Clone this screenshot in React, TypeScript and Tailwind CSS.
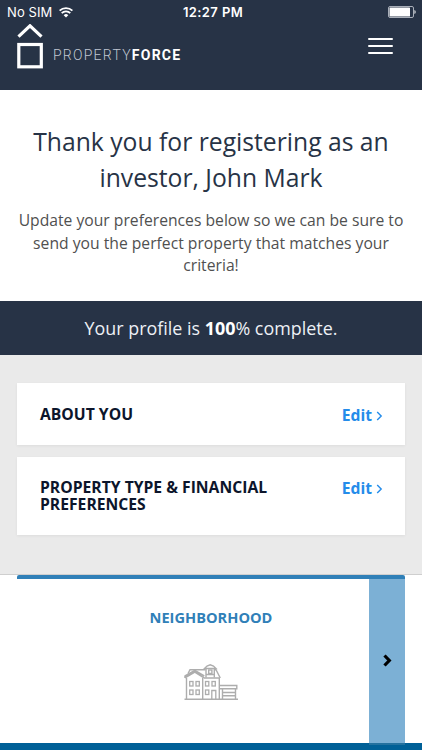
function StatusBar() {
  return (
    <div className="grid h-6 grid-cols-3 items-center pl-[7px] pr-[6px] text-[13px] leading-6 text-white font-['Inter',sans-serif]">
      <div className="flex items-center gap-[7px]">
        <span className="tracking-[0.1px]">No SIM</span>
        <svg width="14" height="11" viewBox="0 0 14 11" fill="none" stroke="white" strokeWidth="1.8">
          <path d="M.6 3.7a9 9 0 0 1 12.800 0M2.700 6.100a6.100 6.100 0 0 1 8.600 0" />
          <path d="M4.700 8.200a3.300 3.300 0 0 1 4.600 0L7 10.600Z" fill="white" stroke="none" />
        </svg>
      </div>
      <span className="whitespace-nowrap pl-[3px] text-center font-semibold tracking-[0.4px]">12:27 PM</span>
      <svg className="justify-self-end" width="28" height="12" viewBox="0 0 28 12">
        <rect x=".5" y=".5" width="25" height="11" rx="1.5" fill="none" stroke="#a9afb9" />
        <rect x="1.5" y="1.5" width="20.5" height="9" rx=".6" fill="white" />
        <path d="M26.500 4c1.500.5 1.500 3.500 0 4Z" fill="white" />
      </svg>
    </div>
  );
}

function Header() {
  return (
    <header className="h-[90px] bg-[#273346]">
      <StatusBar />
      <div className="flex h-[45px] items-start justify-between pl-[17px] pr-[29px]">
        <div className="flex items-start">
          <svg width="26" height="45" viewBox="0 0 26 45" fill="none" stroke="white">
            <path d="M1.500 12.600 13 1.800l11.500 10.800" strokeWidth="3.200" />
            <rect x="1.800" y="20.500" width="22.500" height="22.300" strokeWidth="3.200" />
          </svg>
          <span className="ml-[10px] mt-[21px] text-[14px] leading-5 tracking-[1.25px] text-[#c0c7d2] font-['Roboto',sans-serif] font-light">
            PROPERTY<b className="font-bold text-white">FORCE</b>
          </span>
        </div>
        <button className="mt-[14px] flex flex-col gap-[5px]" aria-label="Menu">
          <span className="h-[2px] w-[25px] rounded-[1px] bg-white" />
          <span className="h-[2px] w-[25px] rounded-[1px] bg-white" />
          <span className="h-[2px] w-[25px] rounded-[1px] bg-white" />
        </button>
      </div>
    </header>
  );
}

function Edit() {
  return (
    <a className="flex h-[20px] items-center text-[15.7px] leading-[20px] font-bold text-[#258cea]">
      Edit
      <svg className="ml-[4px] mt-[2px]" width="7" height="10" viewBox="0 0 7 10" fill="none" stroke="#258cea" strokeWidth="1.4">
        <path d="m1.200 1 4 4-4 4" />
      </svg>
    </a>
  );
}

function House() {
  return (
    <svg width="55" height="37" viewBox="0 0 55 37" fill="none" stroke="#adadad" strokeWidth="1.4">
      <path d="M.5 35.300h53.500M2.500 35V14M18.700 35V14M35.300 35V14" />
      <path d="M1 13.800 10.800 8 20 13.800M1 12 10.800 6.300 20.300 12M1 11.500v2.500M20 14h16" strokeWidth="1.500" />
      <path d="M4 9.500 6 5.700h15.500M30.500 5.700h1.500L36.300 14" />
      <path d="M22 13.500V4.500M30.300 13.500V4.500M20.500 4.500 23 2l3.200-1.200L29.500 2 32 4.500ZM22.500 10.500h8" />
      <rect x="24.700" y="6" width="3.200" height="3.500" />
      <g strokeWidth="1.300">
        <rect x="5.700" y="17.500" width="3.300" height="4.500" />
        <rect x="12" y="17.500" width="3.300" height="4.500" />
        <rect x="5.700" y="26" width="3.300" height="4.500" />
        <rect x="12" y="26" width="3.300" height="4.500" />
        <rect x="21.500" y="17.500" width="3.300" height="4.500" />
        <rect x="28" y="17.500" width="3.300" height="4.500" />
        <rect x="21.500" y="26" width="3.300" height="4.500" />
        <path d="M27.800 35v-8.500h4V35" />
      </g>
      <path d="M35.500 21.500h17.300v3.300H35.500M38.500 35V25M51.500 35V25M39 28.500h12M39 31.800h12" />
    </svg>
  );
}

export default function App() {
  return (
    <main className="h-[750px] w-[422px] overflow-hidden bg-white font-['Open_Sans',sans-serif]">
      <Header />
      <section className="h-[211px] pt-[34px] text-center">
        <h1 className="text-[24.7px] leading-[36px] text-[#273346]">
          Thank you for registering as an
          <br />
          investor, John Mark
        </h1>
        <p className="mt-[13px] text-[15.7px] leading-[22.6px] text-[#505050]">
          Update your preferences below so we can be sure to
          <br />
          send you the perfect property that matches your
          <br />
          criteria!
        </p>
      </section>
      <section className="h-[54px] bg-[#273346] text-center text-[17.9px] leading-[54px] text-[#edf0f5]">
        Your profile is <b className="text-white">100</b>% complete.
      </section>
      <section className="flex h-[220px] flex-col gap-[12px] border-b border-[#cfcfcf] bg-[#eaeaea] px-[17px] pt-[28px]">
        <div className="flex h-[62px] items-start justify-between bg-white pl-[23px] pr-[22px] pt-[22px] shadow-[0_1px_3px_rgba(0,0,0,0.06)]">
          <h2 className="text-[15.7px] leading-[18px] font-bold text-[#0c152b]">ABOUT YOU</h2>
          <Edit />
        </div>
        <div className="flex h-[78px] items-start justify-between bg-white pl-[23px] pr-[22px] pt-[21px] shadow-[0_1px_3px_rgba(0,0,0,0.06)]">
          <h2 className="pt-px text-[15.7px] leading-[17px] font-bold text-[#0c152b]">
            PROPERTY TYPE &amp; FINANCIAL
            <br />
            PREFERENCES
          </h2>
          <Edit />
        </div>
      </section>
      <section className="mx-[17px] flex h-[168px] flex-col rounded-t-[2px] border-t-4 border-[#3080b8]">
        <div className="flex flex-1">
          <div className="w-[36px]" />
          <div className="flex flex-1 flex-col items-center pt-[28px]">
            <h3 className="text-[14.6px] leading-[20px] font-bold text-[#3080b8]">NEIGHBORHOOD</h3>
            <div className="mt-[37px]">
              <House />
            </div>
          </div>
          <button className="flex w-[36px] items-center justify-center bg-[#7cb0d5] pb-[2px]" aria-label="Next">
            <svg width="9" height="13" viewBox="0 0 9 13" fill="none" stroke="black" strokeWidth="3.200">
              <path d="m1.500 1.500 4.800 5-4.800 5" />
            </svg>
          </button>
        </div>
      </section>
      <footer className="h-[7px] bg-[#006097] px-[17px]">
        <div className="ml-auto h-[2px] w-[36px] bg-[#23719f]" />
      </footer>
    </main>
  );
}
